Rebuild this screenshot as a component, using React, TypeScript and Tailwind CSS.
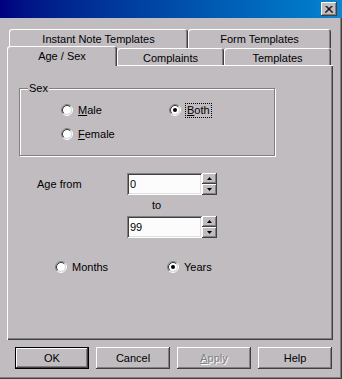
import type { ReactNode } from 'react'

const bg = 'bg-[#c0bcc0]'

function Radio({ checked }: { checked?: boolean }) {
  return (
    <svg width="12" height="12" viewBox="0 0 12 12" className="shrink-0">
      <circle cx="6" cy="6" r="4" fill="#ffffff" />
      <path d="M2.11 9.89 A5.5 5.5 0 0 1 9.89 2.11" stroke="#808080" fill="none" />
      <path d="M9.89 2.11 A5.5 5.5 0 0 1 2.11 9.89" stroke="#ffffff" fill="none" />
      <path d="M2.82 9.18 A4.5 4.5 0 0 1 9.18 2.82" stroke="#404040" fill="none" />
      <path d="M9.18 2.82 A4.5 4.5 0 0 1 2.82 9.18" stroke="#dfdfdf" fill="none" />
      {checked && <circle cx="6" cy="6" r="2" fill="#000000" />}
    </svg>
  )
}

function RadioItem({ checked, focus, children }: { checked?: boolean; focus?: boolean; children: ReactNode }) {
  return (
    <div className="flex items-center gap-[5px] h-[12px]">
      <Radio checked={checked} />
      <span className={focus ? 'outline outline-1 outline-dotted outline-black px-[1px] leading-[13px]' : 'leading-[13px]'}>
        {children}
      </span>
    </div>
  )
}

function Spinner({ value }: { value: string }) {
  return (
    <div className="flex">
      <div className="w-[75px] h-[22px] bg-[#fcfcfc] pl-[3px] flex items-center shadow-[inset_1px_1px_#808080,inset_-1px_-1px_#ffffff,inset_2px_2px_#404040,inset_-2px_-2px_#dfdfdf]">
        {value}
      </div>
      <div className="flex flex-col">
        <SpinButton up />
        <SpinButton />
      </div>
    </div>
  )
}

function SpinButton({ up }: { up?: boolean }) {
  return (
    <div className={`w-[15px] h-[11px] ${bg} flex items-center justify-center shadow-[inset_-1px_-1px_#404040,inset_1px_1px_#ffffff,inset_-2px_-2px_#808080]`}>
      <svg width="5" height="3" viewBox="0 0 5 3">
        <polygon points={up ? '2.5,0 5,3 0,3' : '0,0 5,0 2.5,3'} fill="#000000" />
      </svg>
    </div>
  )
}

const tabShadow = 'shadow-[inset_1px_1px_#ffffff,inset_-1px_0_#404040,inset_-2px_0_#808080]'
const btnShadow = 'shadow-[inset_-1px_-1px_#404040,inset_1px_1px_#ffffff,inset_-2px_-2px_#808080]'

export default function App() {
  return (
    <div className={`w-[342px] h-[379px] ${bg} flex flex-col text-[11px] text-black font-['Liberation_Sans',Arial,sans-serif] shadow-[inset_-1px_-1px_#404040,inset_-2px_-2px_#808080]`}>
      <div className="h-[18px] bg-gradient-to-r from-[#000080] to-[#1084d0] flex items-center justify-end pr-[5px]">
        <div className={`w-[16px] h-[14px] ${bg} flex items-center justify-center shadow-[inset_-1px_-1px_#404040,inset_1px_1px_#ffffff,inset_-2px_-2px_#808080]`}>
          <svg width="8" height="7" viewBox="0 0 8 7">
            <path d="M0.5 0 L7.5 7 M1.5 0 L8 6.5 M7.5 0 L0.5 7 M6.5 0 L0 6.5" stroke="#000000" strokeWidth="1" fill="none" />
          </svg>
        </div>
      </div>

      <div className="mt-[11px] ml-[7px] flex flex-col">
        <div className="flex ml-[2px] h-[19px]">
          <div className={`w-[179px] h-[19px] rounded-t-[3px] ${tabShadow} flex justify-center pt-[3px] leading-[14px]`}>
            Instant Note Templates
          </div>
          <div className={`w-[143px] h-[19px] rounded-t-[3px] ${tabShadow} flex justify-center pt-[3px] leading-[14px]`}>
            Form Templates
          </div>
        </div>
        <div className="flex items-end h-[17px]">
          <div className={`relative z-10 w-[110px] h-[20px] mb-[-1px] ${bg} rounded-t-[3px] ${tabShadow} flex justify-center pt-[3px] leading-[14px]`}>
            Age / Sex
          </div>
          <div className={`w-[107px] h-[17px] rounded-t-[3px] ${tabShadow} flex justify-center pt-[3px] leading-[14px]`}>
            Complaints
          </div>
          <div className={`w-[107px] h-[17px] rounded-t-[3px] ${tabShadow} flex justify-center pt-[3px] leading-[14px]`}>
            Templates
          </div>
        </div>

        <div className="w-[326px] h-[275px] pl-[12px] pt-[23px] shadow-[inset_1px_1px_#ffffff,inset_-1px_-1px_#404040,inset_-2px_-2px_#808080]">
          <div className="relative w-[256px] h-[68px] border border-[#808080] shadow-[inset_1px_1px_#ffffff,1px_1px_#ffffff]">
            <span className={`absolute left-[8px] top-[-8px] ${bg} px-[1px] leading-[14px]`}>Sex</span>
            <div className="grid grid-cols-[108px_auto] gap-y-[12px] pl-[41px] pt-[15px]">
              <RadioItem>
                <u>M</u>ale
              </RadioItem>
              <RadioItem checked focus>
                <u>B</u>oth
              </RadioItem>
              <RadioItem>
                <u>F</u>emale
              </RadioItem>
            </div>
          </div>

          <div className="mt-[17px] flex items-center pl-[18px]">
            <span className="w-[90px]">Age from</span>
            <Spinner value="0" />
          </div>
          <div className="h-[21px] flex items-center pl-[133px]">to</div>
          <div className="pl-[108px]">
            <Spinner value="99" />
          </div>

          <div className="mt-[23px] flex pl-[36px]">
            <div className="w-[112px]">
              <RadioItem>Months</RadioItem>
            </div>
            <RadioItem checked>Years</RadioItem>
          </div>
        </div>
      </div>

      <div className="mt-[7px] ml-[15px] flex gap-[7px]">
        <div className="w-[74px] h-[22px] border border-black">
          <div className={`w-full h-full flex items-center justify-center ${btnShadow}`}>OK</div>
        </div>
        <div className={`w-[74px] h-[22px] flex items-center justify-center ${btnShadow}`}>Cancel</div>
        <div className={`w-[74px] h-[22px] flex items-center justify-center text-[#808080] [text-shadow:1px_1px_#ffffff] ${btnShadow}`}>
          <span>
            <u>A</u>pply
          </span>
        </div>
        <div className={`w-[74px] h-[22px] flex items-center justify-center ${btnShadow}`}>Help</div>
      </div>
    </div>
  )
}
